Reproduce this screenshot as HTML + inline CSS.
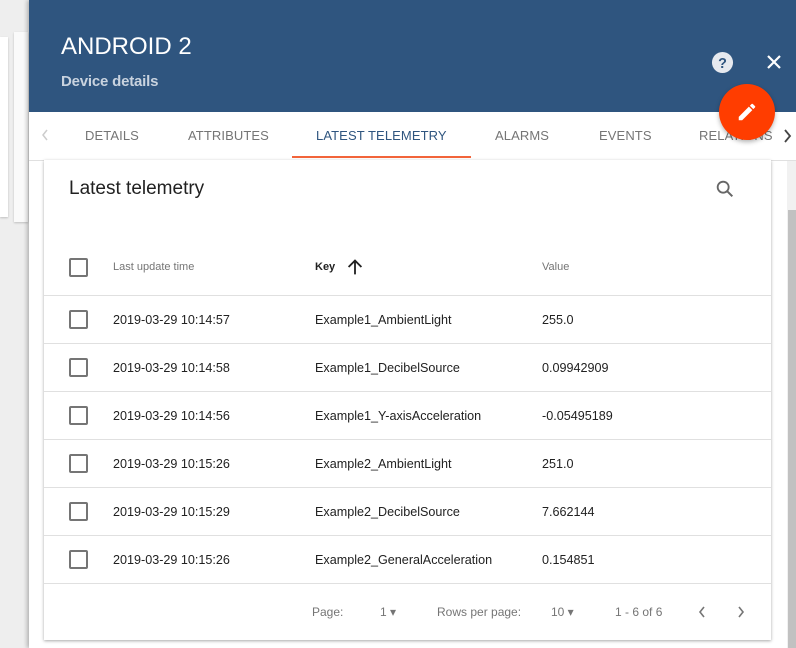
<!DOCTYPE html>
<html><head><style>
*{margin:0;padding:0;box-sizing:border-box}
body{width:796px;height:648px;overflow:hidden;background:#eeeeee;font-family:"Liberation Sans",Roboto,sans-serif;position:relative}
.abs{position:absolute}
.panel{left:29px;top:0;width:767px;height:648px;background:#fff;box-shadow:-2px 0 4px rgba(0,0,0,.25)}
.hdr{left:29px;top:0;width:767px;height:112px;background:#2f557f}
.tab{position:absolute;top:128px;font-size:13px;color:#757575;letter-spacing:.1px}
.card{left:44px;top:160px;width:727px;height:480px;background:#fff;box-shadow:0 1px 3px rgba(0,0,0,.35)}
.row{position:absolute;left:0;width:727px;height:48px;border-top:1px solid #e0e0e0;font-size:12.6px;color:#212121}
.row span{position:absolute;top:17px}
.cb{position:absolute;left:25px;top:14px;width:19px;height:19px;border:2px solid #757575;border-radius:2px}
.ft{position:absolute;top:445px;font-size:12px;color:#757575}
</style></head><body>
<div class="abs" style="left:0;top:37px;width:8px;height:180px;background:#fff;box-shadow:0 1px 2px rgba(0,0,0,.2)"></div>
<div class="abs" style="left:14px;top:32px;width:14px;height:190px;background:#fafafa;box-shadow:0 1px 2px rgba(0,0,0,.2)"></div>
<div class="abs panel"></div>
<div class="abs hdr"></div>
<div class="abs" style="left:61px;top:33px;font-size:24px;color:#fff">ANDROID 2</div>
<div class="abs" style="left:61px;top:73px;font-size:15px;color:#c9d3df;font-weight:bold;letter-spacing:-.2px">Device details</div>
<svg class="abs" style="left:711px;top:51px" width="23" height="23" viewBox="0 0 24 24"><circle cx="12" cy="12" r="11" fill="#e6e9ef"/><text x="12" y="17.5" text-anchor="middle" font-size="15" font-weight="bold" fill="#2f557f" font-family="Liberation Sans">?</text></svg>
<svg class="abs" style="left:764px;top:52px" width="20" height="20" viewBox="0 0 20 20"><path d="M4 4L16 16M16 4L4 16" stroke="#fff" stroke-width="2.2"/></svg>
<svg class="abs" style="left:40px;top:128px" width="10" height="14" viewBox="0 0 10 14"><path d="M7 2L3 7l4 5" stroke="#ccc" stroke-width="1.5" fill="none"/></svg>
<div class="tab" style="left:85px">DETAILS</div>
<div class="tab" style="left:188px">ATTRIBUTES</div>
<div class="tab" style="left:316px;color:#2f557f">LATEST TELEMETRY</div>
<div class="abs" style="left:292px;top:156px;width:179px;height:2px;background:#f2643a"></div>
<div class="tab" style="left:495px">ALARMS</div>
<div class="tab" style="left:599px">EVENTS</div>
<div class="tab" style="left:699px">RELATIONS</div>
<svg class="abs" style="left:782px;top:128px" width="10" height="16" viewBox="0 0 10 16"><path d="M3 2l5 6-5 6" stroke="#444" stroke-width="1.8" fill="none"/></svg>
<div class="abs" style="left:29px;top:160px;width:767px;height:1px;background:#e0e0e0"></div>
<div class="abs" style="left:719px;top:84px;width:56px;height:56px;border-radius:50%;background:#ff3d00;box-shadow:0 2px 5px rgba(0,0,0,.3)"></div>
<svg class="abs" style="left:736px;top:101px" width="22" height="22" viewBox="0 0 24 24"><path fill="#fff" d="M3 17.25V21h3.75L17.81 9.94l-3.75-3.75L3 17.25zM20.71 7.04a1 1 0 0 0 0-1.41l-2.34-2.34a1 1 0 0 0-1.41 0l-1.83 1.83 3.75 3.75 1.83-1.83z"/></svg>
<div class="abs" style="left:787px;top:161px;width:9px;height:487px;background:#f1f1f1"></div>
<div class="abs" style="left:788px;top:210px;width:8px;height:438px;background:#c1c1c1"></div>
<div class="abs card">
<div class="abs" style="left:25px;top:18px;font-size:19px;color:#212121">Latest telemetry</div>
<svg class="abs" style="left:670px;top:18px" width="22" height="22" viewBox="0 0 24 24"><circle cx="10" cy="10" r="6" fill="none" stroke="#666" stroke-width="2"/><path d="M14.5 14.5L20 20" stroke="#666" stroke-width="2.2"/></svg>
<div class="row" style="top:87px;border-top:none"><div class="cb" style="top:11px"></div><span style="left:69px;font-size:11px;color:#757575;top:14px">Last update time</span><span style="left:271px;font-size:11px;color:#212121;font-weight:bold;top:14px">Key</span><svg style="position:absolute;left:300px;top:9px" width="22" height="22" viewBox="0 0 24 24"><path d="M12 20V5M5 12l7-7 7 7" stroke="#222" stroke-width="2" fill="none"/></svg><span style="left:498px;font-size:11px;color:#757575;top:14px">Value</span></div>
<div class="row" style="top:135px"><div class="cb"></div><span style="left:69px">2019-03-29 10:14:57</span><span style="left:271px">Example1_AmbientLight</span><span style="left:498px">255.0</span></div>
<div class="row" style="top:183px"><div class="cb"></div><span style="left:69px">2019-03-29 10:14:58</span><span style="left:271px">Example1_DecibelSource</span><span style="left:498px">0.09942909</span></div>
<div class="row" style="top:231px"><div class="cb"></div><span style="left:69px">2019-03-29 10:14:56</span><span style="left:271px">Example1_Y-axisAcceleration</span><span style="left:498px">-0.05495189</span></div>
<div class="row" style="top:279px"><div class="cb"></div><span style="left:69px">2019-03-29 10:15:26</span><span style="left:271px">Example2_AmbientLight</span><span style="left:498px">251.0</span></div>
<div class="row" style="top:327px"><div class="cb"></div><span style="left:69px">2019-03-29 10:15:29</span><span style="left:271px">Example2_DecibelSource</span><span style="left:498px">7.662144</span></div>
<div class="row" style="top:375px"><div class="cb"></div><span style="left:69px">2019-03-29 10:15:26</span><span style="left:271px">Example2_GeneralAcceleration</span><span style="left:498px">0.154851</span></div>
<div class="row" style="top:423px;height:1px"></div>
<div class="ft" style="left:268px">Page:</div>
<div class="ft" style="left:336px">1 ▾</div>
<div class="ft" style="left:393px">Rows per page:</div>
<div class="ft" style="left:507px">10 ▾</div>
<div class="ft" style="left:571px">1 - 6 of 6</div>
<svg class="abs" style="left:653px;top:444px" width="10" height="16" viewBox="0 0 10 16"><path d="M7 3L3 8l4 5" stroke="#757575" stroke-width="1.6" fill="none"/></svg>
<svg class="abs" style="left:692px;top:444px" width="10" height="16" viewBox="0 0 10 16"><path d="M3 3l4 5-4 5" stroke="#757575" stroke-width="1.6" fill="none"/></svg>
</div>
</body></html>
